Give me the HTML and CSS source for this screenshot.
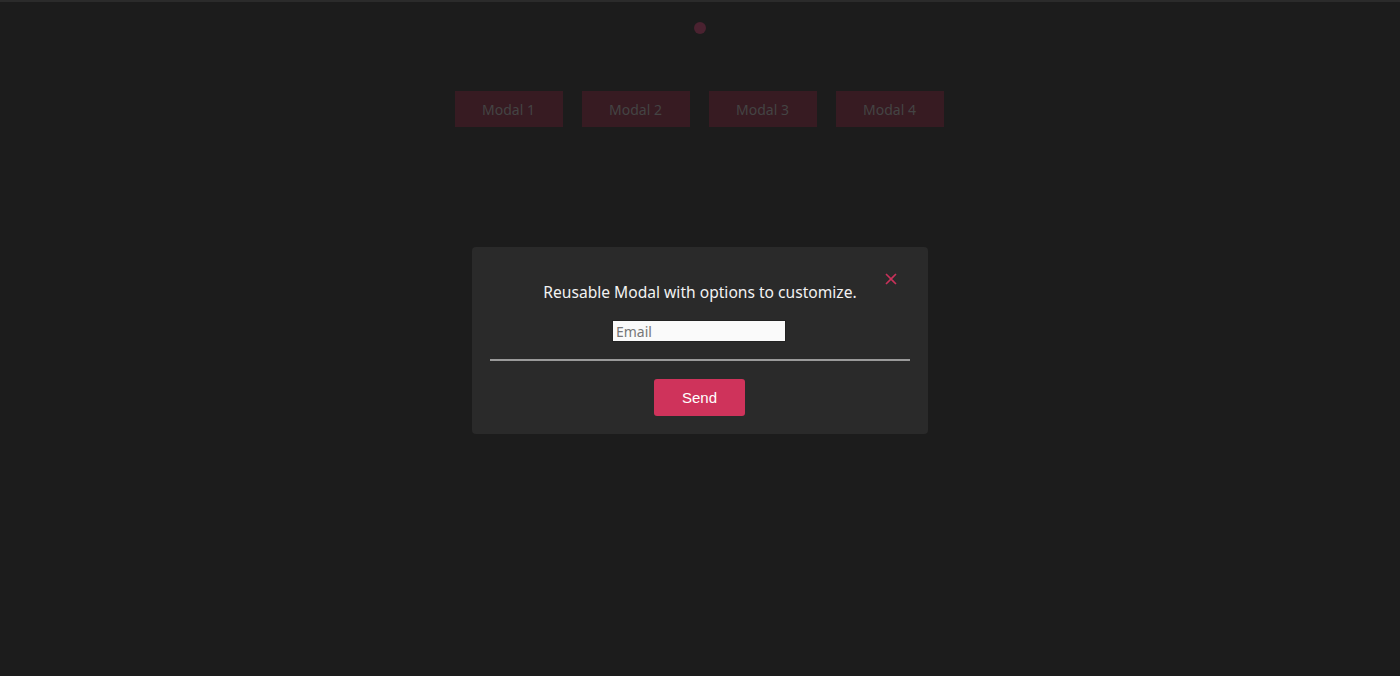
FILE: index.html
```html
<!DOCTYPE html>
<html>
<head>
<meta charset="utf-8">
<link rel="stylesheet" href="styles.css">
</head>
<body>
<div class="page">
  <header class="header">
    <span class="dot"></span>
  </header>
  <nav class="buttons">
    <button class="open-btn">Modal 1</button>
    <button class="open-btn">Modal 2</button>
    <button class="open-btn">Modal 3</button>
    <button class="open-btn">Modal 4</button>
  </nav>
</div>
<div class="overlay">
  <div class="modal">
    <button class="close" aria-label="Close">
      <svg width="12" height="12" viewBox="0 0 12 12"><path d="M1 1 L11 11 M11 1 L1 11" stroke="#c8315a" stroke-width="1.6" fill="none"/></svg>
    </button>
    <h2 class="title">Reusable Modal with options to customize.</h2>
    <input class="email" type="text" placeholder="Email">
    <hr class="divider">
    <button class="send">Send</button>
  </div>
</div>
</body>
</html>
```
FILE: styles.css
```css
html, body {
  margin: 0;
  height: 100%;
}
body {
  background: #1c1c1c;
  font-family: "Noto Sans", "Open Sans", sans-serif;
  border-top: 2px solid #2b2b2b;
  box-sizing: border-box;
}
.page {
  display: flex;
  flex-direction: column;
}
.header {
  height: 89px;
  display: flex;
  justify-content: center;
  padding-top: 20px;
  box-sizing: border-box;
}
.dot {
  width: 12px;
  height: 12px;
  border-radius: 50%;
  background: #4a2230;
}
.buttons {
  display: flex;
  justify-content: center;
  gap: 19px;
  padding-right: 2px;
}
.open-btn {
  width: 108px;
  height: 36px;
  border: none;
  background: #371b22;
  color: #444;
  font-family: "Noto Sans", sans-serif;
  font-size: 14px;
  padding: 0;
}
.overlay {
  position: fixed;
  inset: 0;
  display: flex;
  justify-content: center;
  padding-top: 247px;
  box-sizing: border-box;
}
.modal {
  position: relative;
  width: 456px;
  height: 187px;
  background: #2a2a2a;
  border-radius: 4px;
  box-sizing: border-box;
  padding: 34px 18px 0;
  display: flex;
  flex-direction: column;
  align-items: center;
}
.close {
  position: absolute;
  top: 25px;
  right: 30px;
  width: 14px;
  height: 14px;
  padding: 0;
  border: none;
  background: transparent;
  display: flex;
  align-items: center;
  justify-content: center;
}
.title {
  margin: 0;
  font-size: 15.6px;
  font-weight: 400;
  color: #f2f2f2;
  line-height: 22px;
}
.email {
  margin-top: 17px;
  margin-right: 2px;
  width: 174px;
  height: 22px;
  box-sizing: border-box;
  border: 1px solid #222;
  background: #fafafa;
  font-family: "Noto Sans", sans-serif;
  font-size: 14px;
  padding: 0 3px;
  outline: none;
}
.email::placeholder {
  color: #777;
}
.divider {
  align-self: stretch;
  margin: 17px 0 0;
  border: none;
  height: 2px;
  background: #9a9a9a;
}
.send {
  margin-top: 18px;
  margin-right: 1px;
  width: 91px;
  height: 37px;
  border: none;
  border-radius: 3px;
  background: #cf335b;
  color: #fff;
  font-family: "Liberation Sans", Arial, sans-serif;
  font-size: 15px;
  padding: 0;
}
```
